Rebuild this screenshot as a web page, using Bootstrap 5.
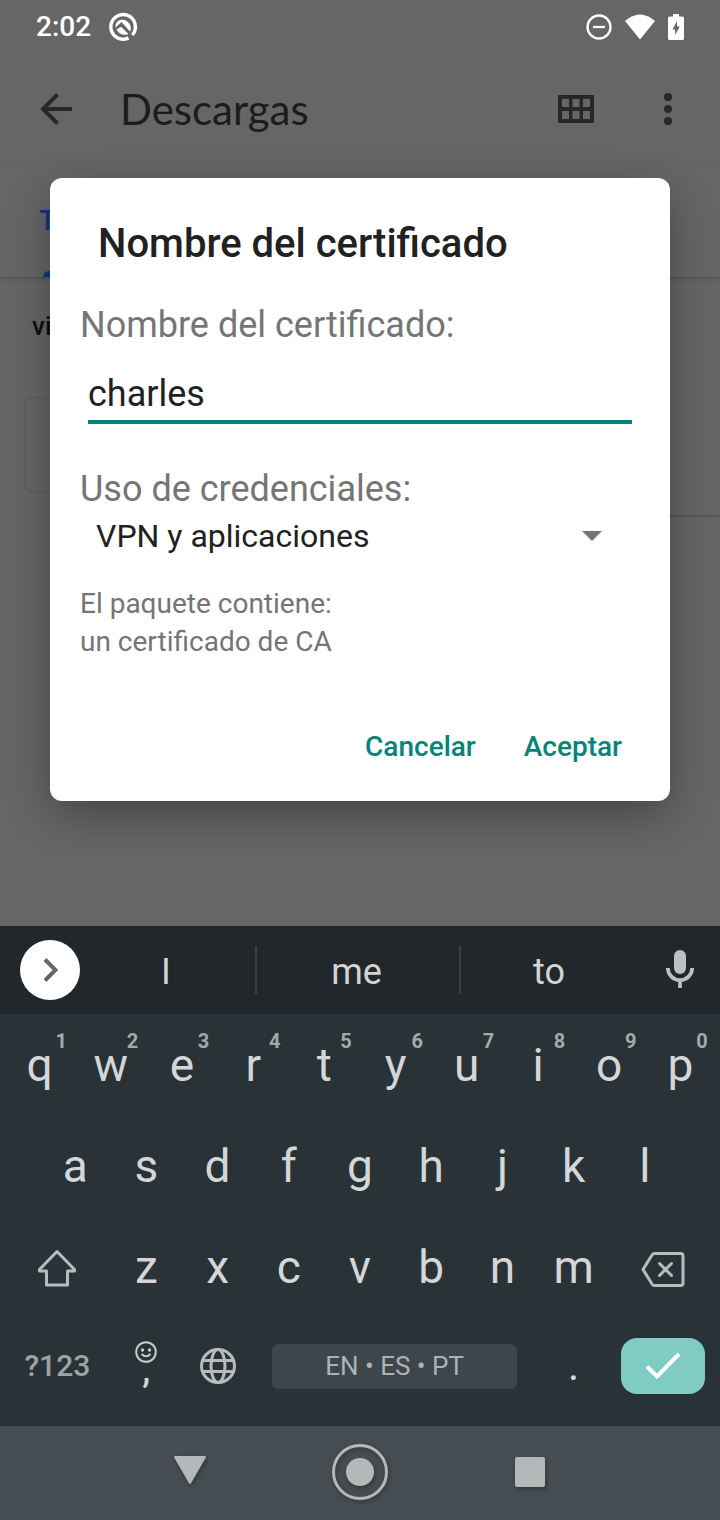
<!DOCTYPE html>
<html lang="es">
<head>
<meta charset="utf-8">
<meta name="viewport" content="width=device-width, initial-scale=1">
<title>Nombre del certificado</title>
<link href="https://cdn.jsdelivr.net/npm/bootstrap@5.3.0/dist/css/bootstrap.min.css" rel="stylesheet">
<style>
body { font-family: Roboto, "Liberation Sans", sans-serif; background: #283237; line-height: 1; }
button { border: 0; background: none; padding: 0; color: inherit; }
svg { display: block; }

/* The app and the dialog share one grid cell */
.stage { background: #666; min-height: 926px; }
.stage > * { grid-area: 1 / 1; }

.status-bar { height: 54px; padding: 0 36px; color: #fff; font-size: 28px; font-weight: 500; }
.status-icons { gap: 13px; }
.app-bar { height: 110px; padding: 0 32px 0 40px; color: #26282a; }
.app-title { font: 400 42px/1 Lato, sans-serif; color: #1b1c1d; padding-left: 48px; }
.tab-strip { height: 113px; padding: 0 39px; box-shadow: 0 2px 4px rgba(0,0,0,.18); }
.tab-item { width: 90px; font-size: 28px; font-weight: 500; color: #0b3a80; text-decoration: none; }
.tab-item::after { content: ""; position: absolute; left: 4px; right: 4px; bottom: 0; height: 6px; border-radius: 6px 6px 0 0; background: #0b3a80; }
.folder { padding: 36px 32px; font-size: 26px; font-weight: 500; color: #0e0e0f; }
.thumb { width: 96px; height: 96px; margin: 22px 24px 0; border: 2px solid #606060; border-radius: 8px; }
.item-line { height: 2px; margin: 22px 0 0 144px; background: #555; }

.cert-dialog { margin: 178px 50px 125px; padding: 36px 30px 18px; background: #fff; border-radius: 12px; box-shadow: 0 14px 44px rgba(0,0,0,.32); color: #212121; }
.cert-title { margin: 0 18px 30px; font-size: 40px; font-weight: 500; line-height: 60px; }
.cert-label { font-size: 36px; line-height: 42px; color: #757575; }
.cert-input { width: auto; height: 60px; margin: 18px 8px 44px; padding: 4px 0 0; border: 0; border-bottom: 4px solid #008577; border-radius: 0; font-size: 36px; line-height: 1; color: #212121; outline: 0; }
.cert-select { margin-top: 6px; }
.cert-select select { width: 100%; height: 40px; padding: 0 16px; border: 0; background: none; appearance: none; font-size: 32px; line-height: 40px; color: #212121; }
.cert-select::after { content: ""; position: absolute; right: 38px; top: 15px; border: 10px solid transparent; border-top-color: #757575; border-bottom: 0; pointer-events: none; }
.cert-info { margin: 29px 0 50px; font-size: 28px; line-height: 38px; color: #757575; }
.cert-actions { gap: 12px; }
.cert-actions button { height: 72px; padding: 0 18px; font-size: 28px; font-weight: 500; color: #008577; }

.suggest { grid-template-columns: 80px 175fr 204fr 181fr 80px; height: 88px; background: #22272b; color: #d3d4d5; }
.suggest .word { height: 48px; padding: 4px 3px 0 0; font-size: 36px; }
.suggest .word.split { border-left: 2px solid #3a3f42; }
.round { width: 60px; height: 60px; background: #fff; color: #666; }

.keys { padding: 0 4px 8px; background: #283237; color: #d4d6d7; }
.key-row { grid-template-columns: repeat(20, minmax(0, 1fr)); height: 101px; }
.key-row > * { grid-column: span 2; height: 100%; font-size: 46px; }
.key-row > .wide { grid-column: span 3; color: #b9bcbf; }
.key-row > .inset { grid-column: 2 / span 2; }
.key-row sup { position: absolute; top: 17px; right: 0; width: 28px; font-size: 20px; font-weight: 700; line-height: 20px; color: #a4a9ab; }
.key-row.bottom > * { padding-bottom: 3px; }
.key-row > .sym { font-size: 30px; font-weight: 500; color: #9ea3a5; }
.key-row > .space { grid-column: span 8; padding-left: 19px; padding-right: 21px; font-size: 26px; color: #aeb2b4; }
.space span { height: 45px; border-radius: 6px; background: #3c464c; }
.key-row > .punct { font-size: 36px; font-weight: 500; }
.key-row > .dot { padding-top: 4px; }
.key-row > .comma { padding-bottom: 17px; }
.comma span { line-height: 14px; }
.enter span { width: 84px; height: 56px; border-radius: 16px; background: #80cbc4; color: #fff; }

.nav-keys { height: 94px; padding-bottom: 2px; background: #454d52; color: #b4b8b9; }
.nav-keys button { width: 170px; height: 100%; filter: drop-shadow(1px 2px 2px rgba(0,0,0,.3)); }
</style>
</head>
<body>
<div class="d-flex flex-column min-vh-100">
  <div class="stage d-grid flex-grow-1">
    <div>
      <div class="status-bar d-flex align-items-center">
        <span>2:02</span>
        <svg class="ms-3" width="32" height="32" viewBox="0 0 32 32" fill="none"><path d="M21.500 26.900A12.300 12.300 0 1 1 25.300 24" stroke="#fff" stroke-width="3.400"/><path d="M9.500 11.500A8.200 8.200 0 0 1 23 20.500L14.500 11L8.600 16.500Q8 14 9.500 11.500Z" fill="#fff"/><path d="M9.500 18.500l4.500-2.800L21.500 23Q14 26 9.500 18.500Z" fill="#fff"/></svg>
        <div class="status-icons ms-auto d-flex align-items-center">
          <svg width="26" height="26" viewBox="0 0 26 26" fill="none" stroke="#fff" stroke-width="2.300"><circle cx="13" cy="13" r="11.500"/><path d="M7 13h12"/></svg>
          <svg width="30" height="26" viewBox="0 0 30 26" fill="#fff"><path d="M0 7Q15-6 30 7L15 25.500Z"/></svg>
          <svg width="16" height="26" viewBox="0 0 16 26"><path fill="#fff" fill-rule="evenodd" d="M5 0h6v2.500h3.500Q16 2.500 16 4v20.500Q16 26 14.500 26h-13Q0 26 0 24.500V4Q0 2.500 1.500 2.500H5ZM9 7l-4.500 8.500h2.700v5.500l4.500-8.500H9Z"/></svg>
        </div>
      </div>
      <div class="app-bar d-flex align-items-center">
        <button type="button" aria-label="Atrás"><svg width="32" height="32" viewBox="0 0 32 32" fill="none" stroke="currentColor" stroke-width="4"><path d="M32 16H3M17.500 1.500L3 16l14.500 14.500"/></svg></button>
        <h1 class="app-title m-0">Descargas</h1>
        <button type="button" class="ms-auto" aria-label="Cuadrícula"><svg width="36" height="28" viewBox="0 0 36 28"><path fill="currentColor" fill-rule="evenodd" d="M0 0h36v28H0ZM4 4v8h7V4Zm10.500 0v8h7V4ZM25 4v8h7V4ZM4 16v8h7v-8Zm10.500 0v8h7v-8ZM25 16v8h7v-8Z"/></svg></button>
        <button type="button" class="ms-5" aria-label="Más opciones"><svg width="46" height="32" viewBox="0 0 46 32" fill="currentColor"><circle cx="26" cy="4" r="4"/><circle cx="26" cy="16" r="4"/><circle cx="26" cy="28" r="4"/></svg></button>
      </div>
      <div class="tab-strip d-flex"><a href="#" class="tab-item position-relative d-flex align-items-center">T</a></div>
      <div class="folder">vi</div>
      <div class="thumb"></div>
      <div class="item-line"></div>
    </div>
    <form class="cert-dialog position-relative align-self-start">
      <h2 class="cert-title">Nombre del certificado</h2>
      <div class="d-flex flex-column">
        <label class="cert-label" for="cert-name">Nombre del certificado:</label>
        <input class="cert-input" id="cert-name" type="text" value="charles">
        <label class="cert-label" for="cert-use">Uso de credenciales:</label>
        <div class="cert-select position-relative">
          <select id="cert-use"><option>VPN y aplicaciones</option></select>
        </div>
      </div>
      <p class="cert-info">El paquete contiene:<br>un certificado de CA</p>
      <div class="cert-actions d-flex justify-content-end">
        <button type="button">Cancelar</button>
        <button type="button">Aceptar</button>
      </div>
    </form>
  </div>

  <div class="suggest d-grid align-items-center">
    <button type="button" class="round rounded-circle d-flex align-items-center justify-content-center ms-auto" aria-label="Más"><svg width="16" height="24" viewBox="0 0 16 24" fill="none" stroke="currentColor" stroke-width="4"><path d="M3 1.500L13.500 12L3 22.500"/></svg></button>
    <button type="button" class="word">I</button>
    <button type="button" class="word split">me</button>
    <button type="button" class="word split">to</button>
    <button type="button" class="d-flex justify-content-center" aria-label="Dictar"><svg width="28" height="40" viewBox="0 0 28 40" fill="none"><rect x="8" y="0" width="12" height="24" rx="6" fill="#bdbfc1"/><path d="M1.800 18a12.200 12.200 0 0 0 24.400 0M14 30v8" stroke="#bdbfc1" stroke-width="3.800"/></svg></button>
  </div>

  <div class="keys">
    <div class="key-row d-grid">
      <button type="button" class="position-relative">q<sup>1</sup></button>
      <button type="button" class="position-relative">w<sup>2</sup></button>
      <button type="button" class="position-relative">e<sup>3</sup></button>
      <button type="button" class="position-relative">r<sup>4</sup></button>
      <button type="button" class="position-relative">t<sup>5</sup></button>
      <button type="button" class="position-relative">y<sup>6</sup></button>
      <button type="button" class="position-relative">u<sup>7</sup></button>
      <button type="button" class="position-relative">i<sup>8</sup></button>
      <button type="button" class="position-relative">o<sup>9</sup></button>
      <button type="button" class="position-relative">p<sup>0</sup></button>
    </div>
    <div class="key-row d-grid">
      <button type="button" class="inset">a</button>
      <button type="button">s</button>
      <button type="button">d</button>
      <button type="button">f</button>
      <button type="button">g</button>
      <button type="button">h</button>
      <button type="button">j</button>
      <button type="button">k</button>
      <button type="button">l</button>
    </div>
    <div class="key-row d-grid">
      <button type="button" class="wide d-flex align-items-center justify-content-center" aria-label="Mayúsculas"><svg width="40" height="40" viewBox="0 -2 40 40" fill="none" stroke="currentColor" stroke-width="3" stroke-linejoin="round"><path d="M20 2.500L37.500 20.500V22H30.500V36H9.500V22H2.500V20.500Z"/></svg></button>
      <button type="button">z</button>
      <button type="button">x</button>
      <button type="button">c</button>
      <button type="button">v</button>
      <button type="button">b</button>
      <button type="button">n</button>
      <button type="button">m</button>
      <button type="button" class="wide d-flex align-items-center justify-content-center" aria-label="Borrar"><svg width="44" height="40" viewBox="0 -4 44 40" fill="none" stroke="currentColor" stroke-width="3" stroke-linecap="round" stroke-linejoin="round"><path d="M13.500 2.500H39.500Q42 2.500 42 5V32Q42 34.500 39.500 34.500H13.500Q12 34.500 11 33L2 18.500L11 4Q12 2.500 13.500 2.500ZM18.500 12.500l12 12M30.500 12.500l-12 12"/></svg></button>
    </div>
    <div class="key-row bottom d-grid">
      <button type="button" class="wide sym">?123</button>
      <button type="button" class="punct comma d-flex flex-column align-items-center justify-content-center"><svg width="22" height="22" viewBox="0 0 22 22" fill="none" stroke="#c8cacc" stroke-width="2"><circle cx="11" cy="11" r="9.800"/><path d="M6.500 13q4.500 4.500 9 0"/><g fill="#c8cacc" stroke="none"><circle cx="7.500" cy="9" r="1.700"/><circle cx="14.500" cy="9" r="1.700"/></g></svg><span>,</span></button>
      <button type="button" class="d-flex align-items-center justify-content-center" aria-label="Idioma"><svg width="36" height="36" viewBox="0 0 36 36" fill="none" stroke="#b9bcbf" stroke-width="3"><circle cx="18" cy="18" r="16.500"/><ellipse cx="18" cy="18" rx="7" ry="16.500"/><path d="M3 12.500H33M3 23.500H33"/></svg></button>
      <button type="button" class="space"><span class="d-flex align-items-center justify-content-center">EN • ES • PT</span></button>
      <button type="button" class="punct dot">.</button>
      <button type="button" class="wide enter d-flex align-items-center justify-content-center" aria-label="Listo"><span class="d-flex align-items-center justify-content-center"><svg width="36" height="28" viewBox="0 0 36 28" fill="none" stroke="currentColor" stroke-width="4"><path d="M2 14.500L12 24.500L34 2"/></svg></span></button>
    </div>
  </div>

  <div class="nav-keys d-flex justify-content-center">
    <button type="button" class="d-flex align-items-center justify-content-center" aria-label="Atrás"><svg width="32" height="32" viewBox="0 0 32 32" fill="currentColor" stroke="currentColor" stroke-width="2" stroke-linejoin="round"><path d="M1 1H31L16 27Z"/></svg></button>
    <button type="button" class="d-flex align-items-center justify-content-center" aria-label="Inicio"><svg width="56" height="56" viewBox="0 0 56 56"><circle cx="28" cy="28" r="14" fill="currentColor"/><circle cx="28" cy="28" r="26.500" fill="none" stroke="currentColor" stroke-width="3"/></svg></button>
    <button type="button" class="d-flex align-items-center justify-content-center" aria-label="Recientes"><svg width="30" height="30" viewBox="0 0 30 30"><rect width="30" height="30" rx="2" fill="currentColor"/></svg></button>
  </div>
</div>
</body>
</html>
